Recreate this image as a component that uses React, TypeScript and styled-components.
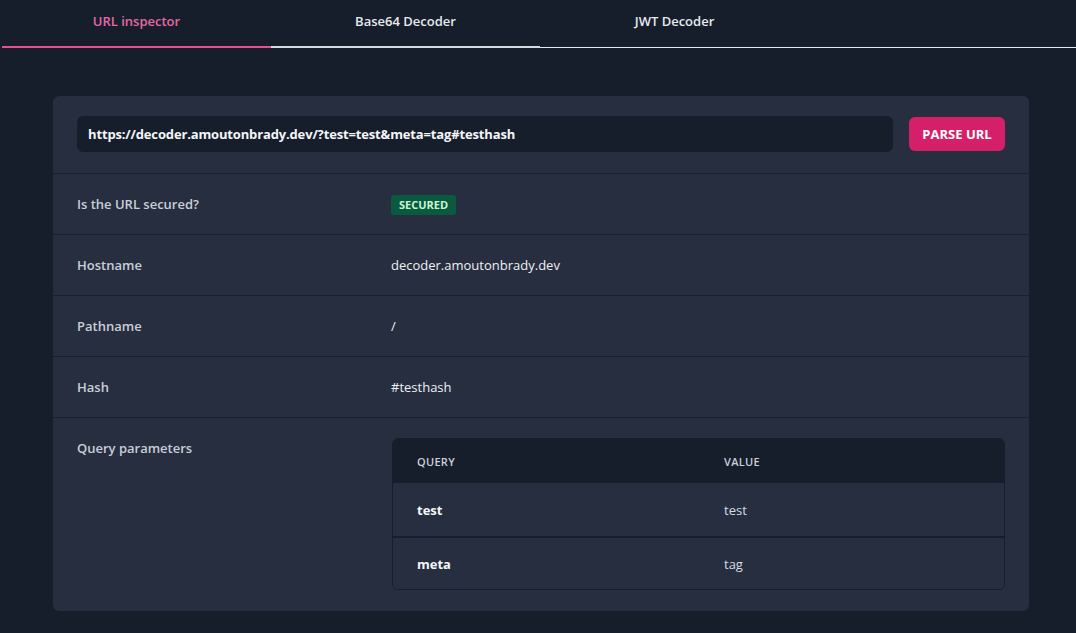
import * as React from "react";
import styled, { createGlobalStyle } from "styled-components";

const GlobalStyle = createGlobalStyle`
  html, body {
    margin: 0;
    padding: 0;
    background: #171e2b;
  }
  body {
    font-family: "Open Sans", "Noto Sans", "Liberation Sans", sans-serif;
    color: #e6e9ef;
  }
  * {
    box-sizing: border-box;
  }
`;

type Row = { label: string; value: React.ReactNode };

const queryParams = [
  { key: "test", value: "test" },
  { key: "meta", value: "tag" },
];

const Page = styled.div`
  min-height: 633px;
  background: #171e2b;
  padding-left: 2px;
`;

const TabList = styled.div`
  display: flex;
  border-bottom: 1px solid #e2e8f0;
`;

const Tab = styled.button<{ $active?: boolean; $plain?: boolean }>`
  width: 269px;
  height: 48px;
  margin-bottom: -1px;
  padding: 0 0 4px;
  border: none;
  border-bottom: 2px solid
    ${(p) => (p.$active ? "#ec4c93" : p.$plain ? "transparent" : "#d5dae2")};
  background: transparent;
  font-family: inherit;
  font-size: 13px;
  font-weight: 600;
  color: ${(p) => (p.$active ? "#e668a6" : "#e6e9ef")};
  cursor: pointer;
`;

const Filler = styled.div`
  flex: 1;
`;

const Content = styled.div`
  padding: 48px 0 0 51px;
`;

const Card = styled.section`
  width: 976px;
  background: #262e3f;
  border-radius: 6px;
  overflow: hidden;
`;

const Toolbar = styled.div`
  display: flex;
  align-items: center;
  gap: 16px;
  padding: 20px 24px 21px;
`;

const UrlInput = styled.input`
  flex: 1;
  height: 36px;
  padding: 0 11px;
  border: none;
  border-radius: 6px;
  background: #171e2b;
  color: #f4f6f9;
  font-family: inherit;
  font-size: 13px;
  font-weight: 700;
  letter-spacing: -0.15px;
  outline: none;
`;

const ParseButton = styled.button`
  width: 96px;
  height: 34px;
  border: none;
  border-radius: 6px;
  background: #d61f69;
  color: #ffffff;
  font-family: inherit;
  font-size: 13px;
  font-weight: 700;
  cursor: pointer;
`;

const InfoRow = styled.div<{ $top?: boolean }>`
  display: grid;
  grid-template-columns: 314px 1fr;
  align-items: ${(p) => (p.$top ? "start" : "center")};
  min-height: 61px;
  padding: ${(p) => (p.$top ? "20px 24px 21px" : "0 24px")};
  border-top: 1px solid #1a2130;
`;

const Label = styled.div`
  font-size: 13px;
  font-weight: 600;
  color: #c9ced8;
  line-height: 20px;
`;

const Value = styled.div`
  font-size: 13px;
  color: #eef0f4;
  line-height: 20px;
`;

const Badge = styled.span`
  display: inline-block;
  padding: 0 8px;
  height: 20px;
  line-height: 20px;
  border-radius: 3px;
  background: #0a5a40;
  color: #c6f6d5;
  font-size: 11px;
  font-weight: 700;
  text-transform: uppercase;
`;

const Table = styled.div`
  margin-left: 1px;
  border: 1px solid #171e2b;
  border-radius: 6px;
  overflow: hidden;
`;

const TableRow = styled.div<{ $head?: boolean }>`
  display: grid;
  grid-template-columns: 307px 1fr;
  align-items: center;
  height: ${(p) => (p.$head ? "44px" : "53px")};
  padding-left: 24px;
  background: ${(p) => (p.$head ? "#171e2b" : "#262e3f")};
  & + & {
    border-top: 2px solid #171e2b;
  }
  &:nth-child(2) {
    border-top: none;
  }
`;

const HeadCell = styled.div`
  font-size: 11px;
  font-weight: 600;
  letter-spacing: 0.3px;
  text-transform: uppercase;
  color: #c9ced8;
`;

const KeyCell = styled.div`
  font-size: 13px;
  font-weight: 700;
  color: #f4f6f9;
`;

const ValueCell = styled.div`
  font-size: 13px;
  color: #d7dbe2;
`;

const rows: Row[] = [
  { label: "Is the URL secured?", value: <Badge>Secured</Badge> },
  { label: "Hostname", value: "decoder.amoutonbrady.dev" },
  { label: "Pathname", value: "/" },
  { label: "Hash", value: "#testhash" },
];

export default function App() {
  return (
    <Page>
      <GlobalStyle />
      <TabList>
        <Tab $active>URL inspector</Tab>
        <Tab>Base64 Decoder</Tab>
        <Tab $plain>JWT Decoder</Tab>
        <Filler />
      </TabList>
      <Content>
        <Card>
          <Toolbar>
            <UrlInput
              readOnly
              value="https://decoder.amoutonbrady.dev/?test=test&meta=tag#testhash"
            />
            <ParseButton>PARSE URL</ParseButton>
          </Toolbar>
          {rows.map((r) => (
            <InfoRow key={r.label}>
              <Label>{r.label}</Label>
              <Value>{r.value}</Value>
            </InfoRow>
          ))}
          <InfoRow $top>
            <Label>Query parameters</Label>
            <Table>
              <TableRow $head>
                <HeadCell>Query</HeadCell>
                <HeadCell>Value</HeadCell>
              </TableRow>
              {queryParams.map((q) => (
                <TableRow key={q.key}>
                  <KeyCell>{q.key}</KeyCell>
                  <ValueCell>{q.value}</ValueCell>
                </TableRow>
              ))}
            </Table>
          </InfoRow>
        </Card>
      </Content>
    </Page>
  );
}
